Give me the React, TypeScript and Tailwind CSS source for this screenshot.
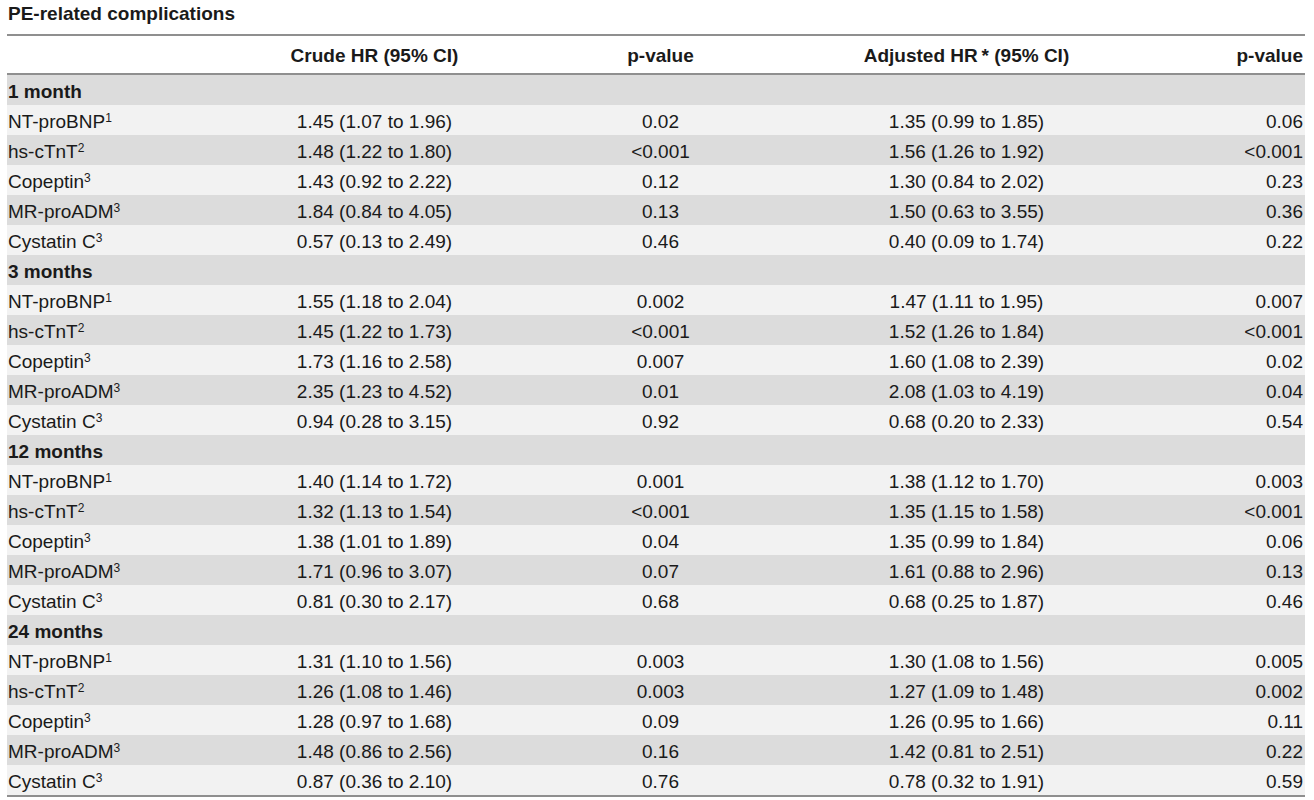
type Row = {
  label: string
  sup: string
  crude: string
  p1: string
  adjusted: string
  p2: string
}

type Section = {
  title: string
  rows: Row[]
}

const markers = [
  { label: "NT-proBNP", sup: "1" },
  { label: "hs-cTnT", sup: "2" },
  { label: "Copeptin", sup: "3" },
  { label: "MR-proADM", sup: "3" },
  { label: "Cystatin C", sup: "3" },
]

const raw: [string, string[][]][] = [
  [
    "1 month",
    [
      ["1.45 (1.07 to 1.96)", "0.02", "1.35 (0.99 to 1.85)", "0.06"],
      ["1.48 (1.22 to 1.80)", "<0.001", "1.56 (1.26 to 1.92)", "<0.001"],
      ["1.43 (0.92 to 2.22)", "0.12", "1.30 (0.84 to 2.02)", "0.23"],
      ["1.84 (0.84 to 4.05)", "0.13", "1.50 (0.63 to 3.55)", "0.36"],
      ["0.57 (0.13 to 2.49)", "0.46", "0.40 (0.09 to 1.74)", "0.22"],
    ],
  ],
  [
    "3 months",
    [
      ["1.55 (1.18 to 2.04)", "0.002", "1.47 (1.11 to 1.95)", "0.007"],
      ["1.45 (1.22 to 1.73)", "<0.001", "1.52 (1.26 to 1.84)", "<0.001"],
      ["1.73 (1.16 to 2.58)", "0.007", "1.60 (1.08 to 2.39)", "0.02"],
      ["2.35 (1.23 to 4.52)", "0.01", "2.08 (1.03 to 4.19)", "0.04"],
      ["0.94 (0.28 to 3.15)", "0.92", "0.68 (0.20 to 2.33)", "0.54"],
    ],
  ],
  [
    "12 months",
    [
      ["1.40 (1.14 to 1.72)", "0.001", "1.38 (1.12 to 1.70)", "0.003"],
      ["1.32 (1.13 to 1.54)", "<0.001", "1.35 (1.15 to 1.58)", "<0.001"],
      ["1.38 (1.01 to 1.89)", "0.04", "1.35 (0.99 to 1.84)", "0.06"],
      ["1.71 (0.96 to 3.07)", "0.07", "1.61 (0.88 to 2.96)", "0.13"],
      ["0.81 (0.30 to 2.17)", "0.68", "0.68 (0.25 to 1.87)", "0.46"],
    ],
  ],
  [
    "24 months",
    [
      ["1.31 (1.10 to 1.56)", "0.003", "1.30 (1.08 to 1.56)", "0.005"],
      ["1.26 (1.08 to 1.46)", "0.003", "1.27 (1.09 to 1.48)", "0.002"],
      ["1.28 (0.97 to 1.68)", "0.09", "1.26 (0.95 to 1.66)", "0.11"],
      ["1.48 (0.86 to 2.56)", "0.16", "1.42 (0.81 to 2.51)", "0.22"],
      ["0.87 (0.36 to 2.10)", "0.76", "0.78 (0.32 to 1.91)", "0.59"],
    ],
  ],
]

const sections: Section[] = raw.map(([title, values]) => ({
  title,
  rows: values.map((v, i) => ({
    ...markers[i],
    crude: v[0],
    p1: v[1],
    adjusted: v[2],
    p2: v[3],
  })),
}))

const grid = "grid grid-cols-[223px_289px_283px_329px_1fr]"

export default function App() {
  return (
    <div
      className="bg-white text-[#1a1a1a] pl-[7px] pr-[9px] h-[800px]"
      style={{ fontFamily: '"Liberation Sans", Arial, sans-serif' }}
    >
      {/* Title */}
      <div className="h-[34px] pt-[3px] pl-[1px] text-[19px] leading-[22px] font-bold">
        PE-related complications
      </div>

      <div className="border-t-2 border-b-2 border-[#8f8f8f]">
        {/* Header */}
        <div className={`${grid} h-[39px] pt-[9px] text-[19px] leading-[22px] font-bold border-b-2 border-[#8f8f8f]`}>
          <div />
          <div className="text-center">Crude HR (95% CI)</div>
          <div className="text-center">p-value</div>
          <div className="text-center">Adjusted HR{"\u2009"}* (95% CI)</div>
          <div className="text-right pr-[2px]">p-value</div>
        </div>

        {/* Body */}
        {sections.map((section) => (
          <div key={section.title}>
            <div className={`${grid} h-[30px] pt-[6px] text-[19px] leading-[22px] bg-[#dcdcdc]`}>
              <div className="pl-[1px] font-bold">{section.title}</div>
            </div>
            {section.rows.map((row, i) => (
              <div
                key={row.label}
                className={`${grid} h-[30px] pt-[6px] text-[19px] leading-[22px] ${
                  i % 2 === 0 ? "bg-[#f2f2f2]" : "bg-[#dcdcdc]"
                }`}
              >
                <div className="pl-[1px] whitespace-nowrap">
                  {row.label}
                  <sup className="text-[12px]">{row.sup}</sup>
                </div>
                <div className="text-center">{row.crude}</div>
                <div className="text-center">{row.p1}</div>
                <div className="text-center">{row.adjusted}</div>
                <div className="text-right pr-[2px]">{row.p2}</div>
              </div>
            ))}
          </div>
        ))}
      </div>
    </div>
  )
}
